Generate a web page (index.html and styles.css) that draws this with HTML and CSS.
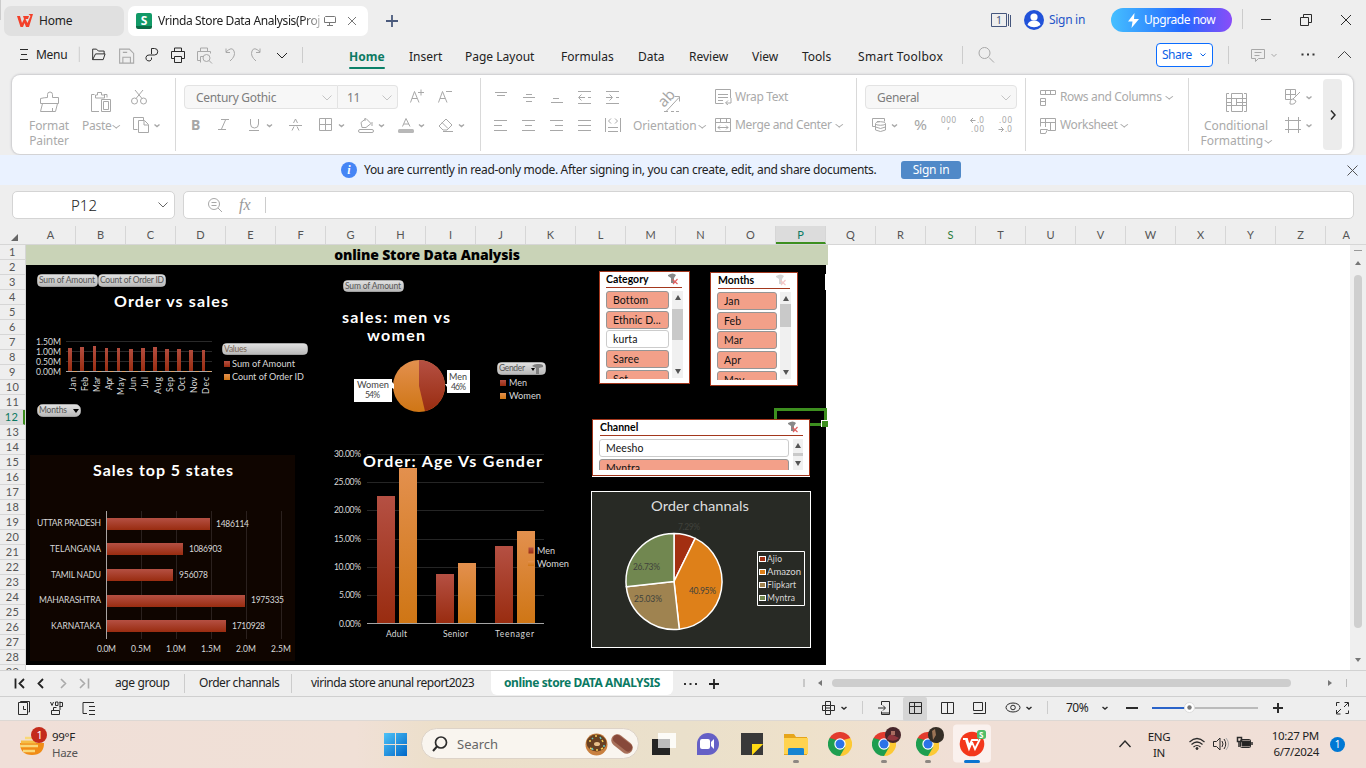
FILE: index.html
```html
<!DOCTYPE html>
<html lang="en">
<head>
<meta charset="utf-8">
<title>Vrinda Store Data Analysis</title>
<link rel="stylesheet" href="styles.css">
</head>
<body>
<svg class="defs" width="0" height="0">
  <defs>
    <linearGradient id="red" x1="0" y1="0" x2="0" y2="1"><stop offset="0" stop-color="#b55043"/><stop offset="1" stop-color="#992c10"/></linearGradient>
    <linearGradient id="orange" x1="0" y1="0" x2="0" y2="1"><stop offset="0" stop-color="#e3904e"/><stop offset="1" stop-color="#cf7615"/></linearGradient>
    <linearGradient id="pill" x1="0" y1="0" x2="0" y2="1"><stop offset="0" stop-color="#e2e2e2"/><stop offset="1" stop-color="#b8b8b8"/></linearGradient>
    <linearGradient id="win" x1="0" y1="0" x2="1" y2="1"><stop offset="0" stop-color="#4fc3f7"/><stop offset="1" stop-color="#0067c8"/></linearGradient>
    <symbol id="chrome" viewBox="-12 -12 24 24">
      <path d="M0 0L-10.4-6A12 12 0 0 1 10.4-6z" fill="#e33b2e"/>
      <path d="M0 0L10.4-6A12 12 0 0 1 0 12z" fill="#fcc934"/>
      <path d="M0 0L0 12A12 12 0 0 1-10.4-6z" fill="#1e9e50"/>
      <path d="M0-6H10.4L5 3z" fill="#fcc934"/><path d="M5.2 3L0 12L-4 4z" fill="#1e9e50"/><path d="M-5.2 3L-10.4-6L0-6z" fill="#1e9e50"/><path d="M-10.4-6H10.4L0-3z" fill="#e33b2e"/>
      <circle r="5.7" fill="#fff"/><circle r="4.5" fill="#2b73e8"/>
    </symbol>
    <symbol id="funnel" viewBox="0 0 12 12"><path d="M1 2Q6-1 9 2L7 5V10H4V5L1 3z" fill="currentColor"/><path d="M5.500 6.500l5 4.500M10.500 6l-4.500 5" stroke="#e06060" stroke-width="1.200"/></symbol>
  </defs>
</svg>

<header class="titlebar">
  <div class="tab home-tab">
    <svg width="17" height="14" viewBox="0 0 17 14"><path d="M0 2h3l2 7 2-4-1-3h6l-1 3H8.500l2 4 3-7-2-2H16L12 13H9L7.500 9 6 13H3.500z" fill="#f3402a"/></svg>
    <span>Home</span>
  </div>
  <div class="tab doc-tab">
    <span class="s-logo">S</span>
    <span class="doc-name">Vrinda Store Data Analysis(Proj</span>
    <svg width="12" height="12" viewBox="0 0 12 12" class="ln mid"><path d="M1.500 1.500h9a1 1 0 0 1 1 1v5h-11v-5zM5.500 8v3M3 10.500h6"/></svg>
    <svg width="10" height="10" viewBox="0 0 10 10" class="ln mid"><path d="M1 1l8 8M9 1L1 9"/></svg>
  </div>
  <svg viewBox="368 0 615 41" class="ln"><path d="M386 21h12M392 15v12" stroke="#4a5a7c" stroke-width="1.800"/></svg>
  <svg viewBox="983 0 41 41" class="ln"><path d="M991.500 13.500h15v13h-15zM1008.500 14v12M1010.500 15v12" stroke="#45567c"/><text x="996" y="24" font-size="10.500" class="tx" fill="#45567c">1</text></svg>
  <svg viewBox="1024 0 25 41"><circle cx="1034" cy="20" r="10" fill="#2152d9"/><circle cx="1034" cy="17" r="3.600" fill="#fff"/><path d="M1027.500 25q1-4.500 6.500-4.500t6.500 4.500q-6.500 4.500-13 0z" fill="#fff"/></svg>
  <span class="signin">Sign in</span>
  <div class="upgrade"><svg width="11" height="15" viewBox="0 0 11 15"><path d="M6.500 0L0 8.500h4.500L3.500 15 11 6H6z" fill="#fff"/></svg><span>Upgrade now</span></div>
  <svg viewBox="1232 0 134 41" class="ln dark"><path d="M1242.500 9v20" stroke="#ccc"/><path d="M1261 19.500h10M1300.500 17.500h8v8h-8zM1303.500 17v-2.500h8v8h-2.500M1341 15l10 10M1351 15l-10 10"/></svg>
</header>

<nav class="menubar">
  <svg viewBox="0 41 36 34" class="ln dark"><path d="M20 49.500h8M21 54.500h6M20 59.500h8"/></svg>
  <span class="menu-word">Menu</span>
  <svg viewBox="75 41 45 34" class="ln dark"><path d="M79.500 47v16" stroke="#ccc"/><path d="M93.500 60.500v-11h4l2 2h6v3M93.500 60.500l3-6h10l-2 6z"/></svg>
  <svg viewBox="118 41 25 34" class="ln dis"><path d="M119.500 48.500h9l4 4v9h-13zM122.500 61v-5h7v5M122.500 51.500h4"/></svg>
  <svg viewBox="145 41 23 34" class="ln dark"><path d="M151.500 54v-5.500h3a3 3 0 0 1 0 6.500h-5.500a3 3 0 1 0 2.500 4.500v-2"/></svg>
  <svg viewBox="168 41 24 34" class="ln dark"><path d="M174.500 52v-4h7v4M174.500 58.500h-3v-7h13v7h-3M174.500 56.500h7v6h-7z"/></svg>
  <svg viewBox="192 41 27 34" class="ln dis"><path d="M200.500 52v-4h7v4M200.500 60.500h-3v-9h13v2M200.500 62.500v-6h3"/><circle cx="206.500" cy="58" r="3.500"/><path d="M209 60.500l3 3"/></svg>
  <svg viewBox="219 41 26 34" class="ln dis"><path d="M226 48.500v4h4M226 52q6-6 8-1t-4 10"/></svg>
  <svg viewBox="245 41 104 34" class="ln dis"><path d="M260 48.500v4h-4M260 52q-6-6-8-1t4 10"/><path d="M277 53l5 5 5-5" stroke="#222"/><path d="M302.500 47v16" stroke="#ccc"/></svg>
  <span class="on">Home</span><span>Insert</span><span>Page Layout</span><span>Formulas</span><span>Data</span><span>Review</span><span>View</span><span>Tools</span><span class="st">Smart Toolbox</span>
  <svg viewBox="950 41 206 34" class="ln dis"><path d="M962.500 46v18" stroke="#ccc"/><circle cx="984.500" cy="53" r="5.500"/><path d="M989 57.500l5 5"/></svg>
  <div class="share">Share<svg width="6" height="4" viewBox="0 0 6 4" class="ln"><path d="M.5.500L3 3 5.500.500"/></svg></div>
  <svg viewBox="1213 41 153 34" class="ln dis"><path d="M1228.500 46v18" stroke="#ccc"/><path d="M1251.500 49.500h13v9h-6l-3 3v-3h-4zM1254.500 52.500h7M1254.500 55.500h5M1271.500 54l2.500 2.500 2.500-2.500" /><path d="M1301.500 54.500h2M1307 54.500h2M1312.500 54.500h2" stroke="#333" stroke-width="2"/><path d="M1338 58l6.500-6.500 6.500 6.500" stroke="#444"/></svg>
</nav>

<section class="ribbon">
  <div class="group g-clip">
    <div class="big"><svg viewBox="26 75 46 43" class="ln dis"><path d="M40.500 103.500v-5q4-1 7-1v-3a2.500 2.500 0 0 1 5 0v3h6v6zM42.500 103.500l-2 8h15l2-8M52.500 108v3"/></svg><span>Format<br>Painter</span></div>
    <div class="big"><svg viewBox="78 75 46 43" class="ln dis"><path d="M99 111.500h-7.500v-17h3M104 94.500h3v3M95.500 98v-3h2v-2.500h4v2.500h3v3zM101.500 99.500h9v12h-9zM103.500 101.500h5v8h-5z"/></svg><span class="dd">Paste</span></div>
    <div class="col">
      <svg viewBox="121 75 54 36" class="ln dis"><circle cx="134.500" cy="101" r="3"/><circle cx="143.500" cy="101" r="3"/><path d="M136 98.500l7-8.500M142 98.500l-7-8.500"/></svg>
      <svg viewBox="121 111 54 43" class="ln dis"><path d="M137.500 129.500h-4v-12h10v3M138.500 120.500h6l4 4v8h-10zM144 121v4h4"/><path d="M154.500 124.500l2.500 2 2.500-2" stroke-width="1.500"/></svg>
    </div>
  </div>
  <div class="group g-font">
    <div class="row1"><div class="combo font">Century Gothic<svg width="10" height="6" viewBox="0 0 10 6" class="ln"><path d="M.5.500L5 5 9.500.500"/></svg></div><div class="combo size">11<svg width="10" height="6" viewBox="0 0 10 6" class="ln"><path d="M.5.500L5 5 9.500.500"/></svg></div>
      <svg viewBox="398 75 82 36" class="ln dis"><path d="M410.500 102.500l4-11 4.500 11M412 98.500h5M418 92.500h6M421 89.500v6M438.500 102.500l4-11 4.500 11M440 98.500h5M446 91.500h6"/></svg></div>
    <svg viewBox="176 111 304 43" class="ln dis glyphs"><text x="191" y="130" font-size="14" font-weight="700">B</text><path d="M221 119.500h8M218 129.500h8M225.500 120l-4 9M250.500 119v5q0 4 4 4t4-4v-5M249 130.500h10M289 125.500h13M292 130.500l2-4M299 130.500l-2-4M293.500 123l2-4 2 4M319.500 118.500h12v12h-12zM325.500 118v13M319 124.500h13M361 122.500l5-4 5 5-5 4h-4zM365 121v-3M372 122v4M439 126l7-7 6 6-5 5h-4zM442 122.500l6 6M443 131.500h10M402.500 126.500l3.500-8 4 8M404 124h5"/><path d="M267 124.500l2.500 2 2.500-2M339 124.500l2.500 2 2.500-2M379 124.500l2.500 2 2.500-2M419 124.500l2.500 2 2.500-2M459 124.500l2.500 2 2.500-2" stroke-width="1.500"/><rect x="358.500" y="129.500" width="15" height="3" rx="1.500"/><rect x="398" y="129" width="16" height="4" rx="1.500" fill="#b8b8b8" stroke="none"/></svg>
  </div>
  <div class="group g-align">
    <div class="col">
      <svg viewBox="481 75 151 36" class="ln dis"><path d="M495 92.500h12M497 95.500h8M526 94.500h6M523 97.500h12M526 101.500h6M553 98.500h6M551 102.500h12M578 91.500h13M578 103.500h13M579 97.500h6M581.500 94.500l-3 3 3 3M588 97.500h3M606 91.500h13M606 103.500h13M606 97.500h6M609.500 94.500l3 3-3 3M616 97.500h3"/></svg>
      <svg viewBox="481 111 151 43" class="ln dis"><path d="M494 120.500h13M494 125.500h8M494 130.500h13M522 120.500h13M525 125.500h7M522 130.500h13M550 120.500h13M555 125.500h8M550 130.500h13M578 120.500h13M578 125.500h13M578 130.500h13M605.500 118v14M620.500 118v14M608 127.500h10M608 131.500h10M611 118.500l-2.500 2.500 2.500 2.500M615 118.500l2.500 2.500-2.500 2.500"/></svg>
    </div>
    <div class="big"><svg viewBox="646 75 46 43" class="ln dis"><text transform="translate(664 108) rotate(-47)" font-size="15" class="tx" fill="#a6a6a6">ab</text><path d="M666 111.500l13-14M674.500 96.500h5v5M664 111.500h4M671 111.500h3M676 111.500h3"/></svg><span class="dd">Orientation</span></div>
    <div class="col">
      <div class="cmd"><svg width="18" height="16" viewBox="714 89 18 16" class="ln dis"><path d="M730.500 98v-8.500h-15v14h8M718 94.500h10M718 97.500h10M718 100.500h5M731 98v5h-5M728 100.500l-2.500 2.500 2.500 2"/></svg>Wrap Text</div>
      <div class="cmd"><svg width="18" height="16" viewBox="714 117 18 16" class="ln dis"><path d="M715.500 118.500h15v13h-15zM715 122.500h15M720.500 118v4M726.500 118v4M718 127.500h10M720 125.500l-2 2 2 2M726 125.500l2 2-2 2"/></svg><span class="dd">Merge and Center</span></div>
    </div>
  </div>
  <div class="group g-num">
    <div class="row1"><div class="combo gen">General<svg width="10" height="6" viewBox="0 0 10 6" class="ln"><path d="M.5.500L5 5 9.500.500"/></svg></div></div>
    <svg viewBox="857 111 168 43" class="ln dis glyphs"><path d="M875 126.500h-2.500v-8h12v3M877 121.500h3"/><path d="M892 124.500l2.500 2 2.500-2" stroke-width="1.500"/><ellipse cx="880.500" cy="123.500" rx="5" ry="1.800"/><path d="M875.500 124v6q5 3 10 0v-6M875.500 127q5 3 10 0M970.500 120.500h5M973 118l-2.500 2.500 2.500 2.500M998.500 129.500h5M1001 127l2.500 2.500-2.500 2.500"/><text x="914" y="130" font-size="14" textLength="13" lengthAdjust="spacingAndGlyphs">%</text><text x="941" y="123" font-size="8" textLength="15">000</text><text x="947" y="129" font-size="11">,</text><text x="977" y="123" font-size="8">.0</text><text x="971" y="132" font-size="8" textLength="13">.00</text><text x="999" y="123" font-size="8" textLength="13">.00</text><text x="1005" y="132" font-size="8">.0</text></svg>
  </div>
  <div class="group g-rows">
    <div class="cmd"><svg width="18" height="17" viewBox="1039 88 18 17" class="ln dis"><path d="M1040.500 89.500h15v4h-15zM1045.500 89v5M1050.500 89v5M1040.500 97.500h5v7h-5zM1040 100.500h5"/></svg><span class="dd">Rows and Columns</span></div>
    <div class="cmd"><svg width="18" height="17" viewBox="1039 116 18 17" class="ln dis"><path d="M1048 129.500h7.500v-12h-15v8M1040 121.500h15M1045.500 118v8M1050.500 122v8M1040.500 128.500h7l-2 4h-5z"/></svg><span class="dd">Worksheet</span></div>
  </div>
  <div class="group g-cond">
    <div class="big"><svg viewBox="1213 75 46 43" class="ln dis"><path d="M1229 93.500h-2.500v18h2.500M1244 93.500h2.500v18h-2.500M1231.500 93.500h11v5h-11zM1231.500 105.500h11v6h-11zM1227 98.500h4M1242 98.500h5M1227 105.500h20M1231.500 98v8M1242.500 98v8M1236.500 99v6M1227 102.500h4M1237 102.500h10"/></svg><span class="dd">Conditional<br>Formatting</span></div>
    <div class="col">
      <svg viewBox="1275 75 46 36" class="ln dis"><path d="M1292 99.500h-6.500v-10h10v6M1285 94.500h10M1290.500 90v9M1300 92l-7 7M1293 99q-3 0-3 5 5 1 6-3z"/><path d="M1306.500 96.500l2.500 2 2.500-2" stroke-width="1.500"/></svg>
      <svg viewBox="1275 111 46 43" class="ln dis"><path d="M1288.500 117v16M1298.500 117v16M1285 120.500h16M1285 129.500h16"/><path d="M1306.500 124.500l2.500 2 2.500-2" stroke-width="1.500"/></svg>
    </div>
    <div class="more"><svg width="6" height="12" viewBox="0 0 6 12" class="ln dark"><path d="M1 1.500L5 6l-4 4.500" stroke-width="1.500"/></svg></div>
  </div>
</section>

<div class="notice">
  <span class="info">i</span><span class="msg">You are currently in read-only mode. After signing in, you can create, edit, and share documents.</span><span class="nbtn">Sign in</span>
  <svg width="11" height="11" viewBox="0 0 11 11" class="ln"><path d="M.5.500l10 10M10.500.500l-10 10" stroke="#555"/></svg>
</div>

<div class="fbar">
  <div class="namebox"><span>P12</span><svg width="10" height="6" viewBox="0 0 10 6" class="ln"><path d="M.5.500L5 5 9.500.500" stroke="#666"/></svg></div>
  <div class="formula"><svg width="90" height="26" viewBox="184 192 90 26" class="ln dis"><circle cx="214" cy="204" r="5.500"/><path d="M218 208l4 4M211.500 202.500h5M211.500 205.500h5"/><path d="M265.500 197v16" stroke="#ccc"/><text x="239" y="210" class="fx">fx</text></svg></div>
</div>

<div class="colhead">
  <span class="corner"><svg width="7" height="7" viewBox="0 0 7 7"><path d="M7 0v7H0z" fill="#666"/></svg></span>
  <span>A</span><span>B</span><span>C</span><span>D</span><span>E</span><span>F</span><span>G</span><span>H</span><span>I</span><span>J</span><span>K</span><span>L</span><span>M</span><span>N</span><span>O</span><span class="sel">P</span><span>Q</span><span>R</span><span class="grn">S</span><span>T</span><span>U</span><span>V</span><span>W</span><span>X</span><span>Y</span><span>Z</span><span class="cut">A</span>
</div>

<main class="sheet">
  <div class="rowhead">
    <span>1</span><span>2</span><span>3</span><span>4</span><span>5</span><span>6</span><span>7</span><span>8</span><span>9</span><span>10</span><span>11</span><span class="sel">12</span><span>13</span><span>14</span><span>15</span><span>16</span><span>17</span><span>18</span><span>19</span><span>20</span><span>21</span><span>22</span><span>23</span><span>24</span><span>25</span><span>26</span><span>27</span><span>28</span><span>29</span>
  </div>
  <div class="canvas">
    <div class="banner">online Store Data Analysis</div>
    <div class="board"></div>

    <svg class="obj c1" viewBox="26 265 294 160">
      <rect x="37.500" y="274.500" width="60" height="12" rx="4" class="pl"/><rect x="98.500" y="274.500" width="67" height="12" rx="4" class="pl"/>
      <text x="39" y="283" class="pt" textLength="56">Sum of Amount</text><text x="100" y="283" class="pt" textLength="64">Count of Order ID</text>
      <text x="114" y="307" class="ttl" textLength="114">Order vs sales</text>
      <path d="M66 341.500h146M66 351.500h146M66 361.500h146" stroke="#292929"/>
      <g class="lb"><text x="36" y="344.500" textLength="25" lengthAdjust="spacingAndGlyphs">1.50M</text><text x="36" y="354.500" textLength="25" lengthAdjust="spacingAndGlyphs">1.00M</text><text x="36" y="364.500" textLength="25" lengthAdjust="spacingAndGlyphs">0.50M</text><text x="36" y="375" textLength="25" lengthAdjust="spacingAndGlyphs">0.00M</text></g>
      <path fill="url(#red)" d="M68 348h4v23h-4zM80 347h4v24h-4zM93 346h3v25h-3zM105 348h3v23h-3zM117 348h3v23h-3zM129 349h4v22h-4zM141 348h4v23h-4zM153 347h4v24h-4zM165 349h4v22h-4zM177 349h4v22h-4zM189 350h4v21h-4zM202 350h3v21h-3z"/>
      <path d="M66 371.500h146" stroke="#a8a8a8"/><path d="M73 371.500h139" stroke="#e0a468" stroke-dasharray="4 8.200"/>
      <g class="lb" text-anchor="end"><text transform="translate(75.500 377) rotate(-90)" textLength="14">Jan</text><text transform="translate(87.500 377) rotate(-90)" textLength="14">Feb</text><text transform="translate(99.500 377) rotate(-90)" textLength="15">Mar</text><text transform="translate(111.500 377) rotate(-90)" textLength="13">Apr</text><text transform="translate(124 377) rotate(-90)" textLength="18">May</text><text transform="translate(136 377) rotate(-90)" textLength="14">Jun</text><text transform="translate(148 377) rotate(-90)" textLength="11">Jul</text><text transform="translate(160.500 377) rotate(-90)" textLength="17">Aug</text><text transform="translate(172.500 377) rotate(-90)" textLength="15">Sep</text><text transform="translate(184.500 377) rotate(-90)" textLength="14">Oct</text><text transform="translate(196.500 377) rotate(-90)" textLength="16">Nov</text><text transform="translate(208.500 377) rotate(-90)" textLength="17">Dec</text></g>
      <rect x="222.500" y="343.500" width="85" height="11" rx="4" class="pl"/><text x="224" y="352" class="pt o" textLength="23">Values</text>
      <rect x="224" y="361" width="6" height="6" fill="url(#red)"/><rect x="224" y="374" width="6" height="6" fill="url(#orange)"/>
      <g class="lb"><text x="232" y="367" textLength="63" lengthAdjust="spacingAndGlyphs">Sum of Amount</text><text x="232" y="380" textLength="72" lengthAdjust="spacingAndGlyphs">Count of Order ID</text></g>
      <rect x="37.500" y="404.500" width="43" height="12" rx="5" class="pl"/><text x="39" y="413" class="pt" textLength="28">Months</text><path d="M73 409h6l-3 4z"/>
    </svg>

    <svg class="obj c2" viewBox="320 265 250 160">
      <rect x="343.500" y="280.500" width="60" height="11" rx="4" class="pl"/><text x="345" y="289" class="pt" textLength="56">Sum of Amount</text>
      <text x="342" y="323" class="ttl" textLength="108">sales: men vs</text><text x="367" y="341" class="ttl" textLength="58">women</text>
      <circle cx="419" cy="386" r="26" fill="url(#orange)"/><path d="M419 386V360A26 26 0 0 1 425 411.300z" fill="url(#red)"/>
      <path d="M354 379h38v3l2 2v5l-2-1v14h-38zM447 370h23v23h-23v-6l-2-3h2z" fill="#fff"/>
      <g class="lb dk"><text x="357" y="388" textLength="32" lengthAdjust="spacingAndGlyphs">Women</text><text x="365" y="398" textLength="15">54%</text><text x="449" y="380" textLength="18" lengthAdjust="spacingAndGlyphs">Men</text><text x="451" y="390" textLength="15">46%</text></g>
      <rect x="497.500" y="362.500" width="48" height="12" rx="4" class="pl"/><text x="499" y="371" class="pt" textLength="26">Gender</text><path d="M531 368h4l-2 3z"/><path d="M532 366q2-2 5-2h2q5 0 4 3l-4 1v6h-3v-6z" fill="#808080"/>
      <rect x="500" y="380" width="6" height="6" fill="url(#red)"/><rect x="500" y="393" width="6" height="6" fill="url(#orange)"/>
      <g class="lb"><text x="509" y="386" textLength="18" lengthAdjust="spacingAndGlyphs">Men</text><text x="509" y="399" textLength="32" lengthAdjust="spacingAndGlyphs">Women</text></g>
    </svg>

    <svg class="obj c3" viewBox="30 455 265 206">
      <rect x="30" y="455" width="265" height="206" fill="#0f0500"/>
      <text x="93" y="476" class="ttl" textLength="140">Sales top 5 states</text>
      <path d="M141.500 511v128M176.500 511v128M211.500 511v128M246.500 511v128M281.500 511v128" stroke="#2b211e"/>
      <g fill="url(#red)"><path d="M107 518h103v12H107z"/><path d="M107 543h76v12h-76z"/><path d="M107 569h66v12h-66z"/><path d="M107 595h138v12H107z"/><path d="M107 620h119v12H107z"/></g>
      <path d="M106.500 511v128" stroke="#a9a4a2"/>
      <g class="lb"><text x="37" y="526" textLength="64">UTTAR PRADESH</text><text x="50" y="552" textLength="51">TELANGANA</text><text x="51" y="578" textLength="50">TAMIL NADU</text><text x="39" y="603" textLength="62">MAHARASHTRA</text><text x="51" y="629" textLength="50">KARNATAKA</text>
      <text x="216" y="527" textLength="33">1486114</text><text x="189" y="552" textLength="33">1086903</text><text x="179" y="578" textLength="29">956078</text><text x="251" y="603" textLength="33">1975335</text><text x="232" y="629" textLength="33">1710928</text>
      <text x="97" y="652" textLength="19">0.0M</text><text x="131" y="652" textLength="20">0.5M</text><text x="166" y="652" textLength="20">1.0M</text><text x="201" y="652" textLength="20">1.5M</text><text x="236" y="652" textLength="20">2.0M</text><text x="271" y="652" textLength="20">2.5M</text></g>
    </svg>

    <svg class="obj c4" viewBox="325 445 255 210">
      <path d="M367 454.500h177M367 482.500h177M367 510.500h177M367 539.500h177M367 567.500h177M367 595.500h177" stroke="#252525"/>
      <g fill="url(#red)"><path d="M377 496h18v127h-18z"/><path d="M436 574h18v49h-18z"/><path d="M495 546h18v77h-18z"/></g>
      <g fill="url(#orange)"><path d="M399 468h18v155h-18z"/><path d="M458 563h18v60h-18z"/><path d="M517 531h18v92h-18z"/></g>
      <path d="M367 623.500h177" stroke="#a5a5a5"/>
      <text x="363" y="467" class="ttl" textLength="179">Order: Age Vs Gender</text>
      <g class="lb"><text x="334" y="457" textLength="27">30.00%</text><text x="334" y="485" textLength="27">25.00%</text><text x="334" y="513" textLength="27">20.00%</text><text x="334" y="542" textLength="27">15.00%</text><text x="334" y="570" textLength="27">10.00%</text><text x="339" y="598" textLength="22">5.00%</text><text x="339" y="627" textLength="22">0.00%</text>
      <text x="386" y="637" textLength="21">Adult</text><text x="443" y="637" textLength="25">Senior</text><text x="495" y="637" textLength="39">Teenager</text><text x="537" y="554" textLength="18" lengthAdjust="spacingAndGlyphs">Men</text><text x="537" y="567" textLength="32" lengthAdjust="spacingAndGlyphs">Women</text></g>
      <rect x="528.500" y="547.500" width="5" height="6" fill="url(#red)"/><rect x="528" y="561" width="6" height="5" fill="url(#orange)"/>
    </svg>

    <div class="obj slicer s-cat">
      <div class="sh">Category<svg width="12" height="12"><use href="#funnel"/></svg></div>
      <div class="sb"><div class="items"><span>Bottom</span><span>Ethnic D...</span><span class="off">kurta</span><span>Saree</span><span>Set</span></div><div class="bar"><i class="up"></i><b></b><i class="dn"></i></div></div>
    </div>
    <div class="obj slicer s-mon">
      <div class="sh">Months<svg width="12" height="12"><use href="#funnel"/></svg></div>
      <div class="sb"><div class="items"><span>Jan</span><span>Feb</span><span>Mar</span><span>Apr</span><span>May</span></div><div class="bar"><i class="up"></i><b></b><i class="dn"></i></div></div>
    </div>
    <div class="obj cursor"></div>
    <div class="obj slicer s-chan">
      <div class="sh">Channel<svg width="12" height="12"><use href="#funnel"/></svg></div>
      <div class="sb"><div class="items"><span class="off">Meesho</span><span>Myntra</span></div><div class="bar"><i class="up"></i><b></b><i class="dn"></i></div></div>
    </div>
    <div class="obj edge"></div>

    <svg class="obj c5" viewBox="591 491 220 157">
      <rect x="591.500" y="491.500" width="219" height="156" fill="#282a25" stroke="#fff"/>
      <text x="651" y="511" class="ot" textLength="98" lengthAdjust="spacingAndGlyphs">Order channals</text>
      <g stroke="#fff" stroke-width="1.500" stroke-linejoin="round"><path d="M674 581.500V533.500A48 48 0 0 1 695.200 538.400z" fill="#a32f11"/><path d="M674 581.500L695.200 538.400A48 48 0 0 1 679.300 629.200z" fill="#de8019"/><path d="M674 581.500L679.300 629.200A48 48 0 0 1 626.300 586.700z" fill="#9f8350"/><path d="M674 581.500L626.300 586.700A48 48 0 0 1 674 533.500z" fill="#718750"/></g>
      <g class="lb pc"><text x="678" y="530" textLength="22">7.29%</text><text x="633" y="570" textLength="27">26.73%</text><text x="689" y="594" textLength="27">40.95%</text><text x="634" y="602" textLength="28">25.03%</text></g>
      <path d="M757.500 551.500h47v54h-47z" fill="none" stroke="#fff"/>
      <g stroke="#fff"><rect x="759.500" y="556.500" width="6" height="5" fill="#a32f11"/><rect x="759.500" y="569.500" width="6" height="5" fill="#de8019"/><rect x="759.500" y="582.500" width="6" height="5" fill="#9f8350"/><rect x="759.500" y="595.500" width="6" height="5" fill="#718750"/></g>
      <g class="lb"><text x="767" y="562" textLength="15">Ajio</text><text x="767" y="575" textLength="34" lengthAdjust="spacingAndGlyphs">Amazon</text><text x="767" y="588" textLength="29">Flipkart</text><text x="767" y="601" textLength="28">Myntra</text></g>
    </svg>
  </div>
  <div class="vscroll"><svg width="16" height="425" viewBox="1350 245 16 425"><path d="M1354 250.500h8" stroke="#999" stroke-width="1"/><path d="M1355 265h6l-3-4zM1355 658h6l-3 4z" fill="#777"/><rect x="1354" y="275" width="8" height="353" rx="4" fill="#cfcfcf"/></svg></div>
</main>

<div class="tabs">
  <svg viewBox="0 670 108 26" class="ln"><path d="M15.500 678.500v10M24 679l-4.500 4.500 4.500 4.500M43 679l-4.500 4.500 4.500 4.500" stroke="#222" stroke-width="1.800"/><path d="M61 679l4.500 4.500-4.500 4.500M80 679l4.500 4.500-4.500 4.500M88.500 678.500v10" stroke="#aaa" stroke-width="1.600"/></svg>
  <span class="t1">age group</span><span class="t2">Order channals</span><span class="t3">virinda store anunal report2023</span><span class="t4">online store DATA ANALYSIS</span>
  <svg viewBox="673 670 159 26" class="ln"><path d="M684 684h2M689.500 684h2M695 684h2" stroke="#333" stroke-width="2"/><path d="M709 684h10M714 679v10" stroke="#222" stroke-width="1.800"/><path d="M804 679v8" stroke="#bbb" stroke-width="1.500"/><path d="M822 680v6l-4-3z" fill="#777" stroke="none"/></svg>
  <span class="hthumb"></span>
  <svg viewBox="1291 670 75 26" class="ln"><path d="M1328 680v6l4-3z" fill="#777" stroke="none"/><path d="M1346.500 679v8" stroke="#bbb"/></svg>
</div>

<div class="status">
  <svg viewBox="0 697 815 24" class="ln dark"><path d="M18.500 702.500h9v12h-9zM20.500 702v-.5h9v10.500h-1M23.500 706v3.500h2.500M50.500 702l1.500 3.500 1.500-3.500M55.500 702v3.500h2.500v-3.500h-2.500M60 701.500v8.500M59.500 702.500h3v4h-3M51.500 714.500v-4h8v4zM53.500 710v-2.500h3M94 702.500h-11v11h4M89 706.500h6M89 710.500h6M89 714.500h6"/></svg>
  <svg viewBox="815 697 55 24" class="ln dark"><path d="M825.500 701.500h5v4h-5zM825.500 710.500h5v4h-5zM825.500 705.500v5M830.500 705.500v5M825.500 705.500h-3v5h3M830.500 705.500h4v5h-4M826 708h4"/><path d="M841.500 707l2.500 2 2.500-2" stroke-width="1.500"/><path d="M862.500 701v13" stroke="#ccc"/></svg>
  <svg viewBox="870 697 33 24" class="ln dark"><path d="M881.500 705v-3.500h8v13h-8v-3M881 713h8M878 708h7M883 705.500l2.500 2.500-2.500 2.500"/></svg>
  <svg viewBox="903 697 24 24" class="ln dark pick"><path d="M909.500 702.500h12v11h-12zM909 706.500h12M914.500 703v10"/></svg>
  <svg viewBox="927 697 128 24" class="ln dark"><path d="M941.500 702.500h12v11h-12zM947.500 703v10M973.500 702.500h9v8h-9zM985.500 702v11.500h-12"/><ellipse cx="1013" cy="707.500" rx="7" ry="4.500"/><circle cx="1013" cy="707.500" r="2.300"/><path d="M1026.500 707l2.500 2 2.500-2" stroke-width="1.500"/><path d="M1047.500 701v13" stroke="#ccc"/></svg>
  <span class="zoomtxt">70%</span>
  <svg viewBox="1095 697 271 24" class="ln dark"><path d="M1102.500 707l2.500 2 2.500-2" stroke-width="1.500"/><path d="M1126 708h12M1273 708h10M1278 703v10" stroke-width="2"/><path d="M1152 708h37" stroke="#2a63c9" stroke-width="2"/><path d="M1189 708h69" stroke="#bbb" stroke-width="2"/><circle cx="1189.500" cy="707.500" r="5" fill="#fff" stroke="#ddd"/><circle cx="1189.500" cy="707.500" r="2.200" fill="#777" stroke="none"/><path d="M1344.500 702.500h4v4M1348 703l-4 4M1336.500 706v-3.500h3M1336.500 710v4h4M1337 713l4-4M1348.500 710.500v3h-3"/></svg>
</div>

<footer class="taskbar">
  <svg viewBox="0 721 50 47"><path d="M20 743h24q0 12-12 12t-12-12z" fill="#f08c16"/><path d="M25 738h8M20 746h18M23 751h12" stroke="#f9d879" stroke-width="2.500"/><path d="M21 742h15" stroke="#f6bd45" stroke-width="3"/><circle cx="39" cy="735" r="8" fill="#c42b1c"/><text x="36.500" y="739" font-size="11" fill="#fff" class="tx">1</text></svg>
  <div class="weather"><span>99°F</span><span class="hz">Haze</span></div>
  <svg viewBox="150 721 271 47"><path d="M384 733h11v11h-11zM396 733h11v11h-11zM384 745h11v11h-11zM396 745h11v11h-11z" fill="url(#win)"/></svg>
  <div class="search"><svg width="16" height="16" viewBox="0 0 16 16" class="ln dark"><circle cx="9" cy="6.500" r="5.500" stroke-width="1.700"/><path d="M5 10.500l-4 4.500" stroke-width="2"/></svg><span>Search</span>
    <svg width="50" height="24" viewBox="586 732 50 24"><circle cx="597.500" cy="744.500" r="11" fill="#c9803f"/><ellipse cx="597.500" cy="743" rx="10" ry="8.500" fill="#684021"/><ellipse cx="598" cy="744" rx="3" ry="2" fill="#e8c08a"/><path d="M590 741h2M596 736h2M603 740l1 2M591 748l2 1M602 749l2-1M597 750h2" stroke="#f8cf51" stroke-width="1.500"/><path d="M593 738l1 1M601 737l1 2M605 745v2M594 750l-1-2" stroke="#62c7c2" stroke-width="1.500"/><rect x="611" y="738" width="24" height="12" rx="6" transform="rotate(38 623 744)" fill="#a8705a"/><rect x="612" y="739" width="22" height="8" rx="4" transform="rotate(38 623 744)" fill="#87493a"/></svg></div>
  <svg viewBox="639 721 300 47"><rect x="652" y="739" width="18" height="16" fill="#242424"/><rect x="658" y="733" width="18" height="15" fill="#fff" opacity=".85"/><path d="M658 739h12v9h-12z" fill="#bbb"/>
    <path d="M697 755v-11a11 11 0 1 1 11 11z" fill="#6560c6"/><rect x="700" y="739" width="10" height="10" rx="2" fill="#fff"/><path d="M711 742l3-3v10l-3-3z" fill="#fff"/>
    <path d="M741 733h22v22h-22z" fill="#393939"/><path d="M752 744h11l-8 11h-3z" fill="#ffda13"/><path d="M763 744l-11 11h11z" fill="#393939"/><path d="M752 744h11l-11 11z" fill="#ffda13"/>
    <path d="M784 734h10l2 3h11v18h-23z" fill="#e6a51b"/><path d="M784 738h24v16h-24z" fill="#ffd34f"/><path d="M788 755v-6q0-1 2-1h12q2 0 2 1v6z" fill="#1684d1"/>
    <use href="#chrome" x="828" y="732" width="24" height="24"/><use href="#chrome" x="872" y="732" width="24" height="24"/><use href="#chrome" x="916" y="732" width="24" height="24"/>
    <circle cx="893" cy="735" r="8" fill="#47252a"/><path d="M887 739q2-6 6-4l6 3q-5 5-12 1z" fill="#8e353c"/><path d="M891 731h4v4h-4z" fill="#a86c60"/>
    <circle cx="936" cy="735" r="8" fill="#342d25"/><path d="M932 731l3-2 1 6-3 5z" fill="#9b7456"/>
    <g fill="#8d8782"><rect x="793" y="760" width="6" height="3" rx="1.500"/><rect x="881" y="760" width="6" height="3" rx="1.500"/><rect x="925" y="760" width="6" height="3" rx="1.500"/></g></svg>
  <svg viewBox="939 721 171 47"><path d="M939 727.500q5 2 5 7.500t-5 7.500z" fill="#342d25"/><rect x="953" y="724.500" width="38" height="38" rx="4" fill="#faf1ee"/><circle cx="972" cy="744" r="12.300" fill="#f3371b"/><path d="M963 739h4l2 7 3-6h6M966 740l3 9 3-7 3 7 5-10" stroke="#fff" stroke-width="1.800" fill="none"/><rect x="977" y="730" width="9" height="9" rx="2.500" fill="#4fbd68"/><text x="979" y="738" font-size="8" font-weight="700" fill="#fff" class="tx">S</text><rect x="964" y="760" width="16" height="3" rx="1.500" fill="#0a74d0"/></svg>
  <svg viewBox="1110 721 30 47" class="ln dark"><path d="M1119.500 747l5.500-6 5.500 6" stroke-width="1.400"/></svg>
  <div class="lang"><span>ENG</span><span>IN</span></div>
  <svg viewBox="1178 721 85 47" class="ln dark"><path d="M1189.500 742q7.500-7 15 0M1191.500 744.500q5.500-5 11 0M1193.500 747q3.500-3 7 0" stroke-width="1.200"/><circle cx="1197" cy="748.500" r="1" fill="#222"/><path d="M1213.500 741.500h3l3.500-3.500v12l-3.500-3.500h-3zM1222 741q2 3 0 6M1224 739q3.500 5 0 10"/><path d="M1226 738q5 6 0 12" stroke="#aaa"/><rect x="1240.500" y="739.500" width="10" height="8" rx="1"/><rect x="1242" y="741" width="8" height="5" fill="#222"/><path d="M1252 742v3M1237.500 737.500h4v4h-4zM1239 742v5" stroke-width="1.500"/></svg>
  <div class="clock"><span>10:27 PM</span><span>6/7/2024</span></div>
  <span class="nb">1</span>
</footer>
</body>
</html>
```
FILE: styles.css
```css
*{box-sizing:border-box}
body{margin:0;width:1366px;height:768px;overflow:hidden;background:#eee;font:12px/16px "Noto Sans","Open Sans",sans-serif;color:#222;display:flex;flex-direction:column}
body>*{flex:none}
svg{display:block}
.defs{position:absolute}
.ln{fill:none;stroke:currentColor}
.dark{color:#2b2b2b}.dis{color:#a8a8a8}.mid{color:#777}
.tx,.glyphs text{font-family:"Noto Sans",sans-serif;stroke:none}
.glyphs text{fill:#a6a6a6}

.titlebar{height:41px;display:grid;grid-template-columns:124px 4px 240px 615px 41px 25px 62px 121px 134px;background:linear-gradient(#ccc,#ccc) 0 0/1px 20px no-repeat}
.tab{height:30px;margin-top:6px;border-radius:7px;display:flex;align-items:center}
.home-tab{margin-left:4px;background:#e0e0e0;padding-left:13px;gap:5px;letter-spacing:-.2px}
.doc-tab{grid-column:3;background:#fff;padding-left:8px}
.s-logo{width:16px;height:16px;border-radius:2px;background:linear-gradient(#119a67 13px,#0a6b45 13px);color:#fff;font:700 12px/15px "Noto Sans";text-align:center}
.doc-name{width:163px;margin:0 3px 0 6px;overflow:hidden;white-space:nowrap;letter-spacing:-.38px;-webkit-mask:linear-gradient(90deg,#000 88%,#0004)}
.doc-tab .mid+.mid{margin-left:11px}
.signin{color:#2455c8;padding-top:12px;letter-spacing:-.3px}
.upgrade{height:24px;margin-top:8px;border-radius:12px;background:linear-gradient(90deg,#45bfff,#2468ff 60%,#8a4df8);color:#fff;display:flex;align-items:center;padding-left:17px;gap:5px;white-space:nowrap;letter-spacing:-.45px}

.menubar{height:34px;display:grid;grid-template-columns:36px 39px 43px 27px 23px 24px 27px 26px 104px 60px 56px 96px 77px 51px 63px 50px 56px 92px 206px 57px 153px;white-space:nowrap}
.menubar>span{padding-top:8px}
.menubar>.menu-word{padding-top:6px;letter-spacing:-.3px}
.menubar>.on{font-weight:700;color:#0b7a63;display:flex;flex-direction:column;width:36px}
.menubar>.st{letter-spacing:.3px}
.on::after{content:"";height:2px;background:#0b8068;border-radius:1px;margin-top:2px}
.share{height:24px;margin-top:2px;border:1px solid #0a6cff;border-radius:4px;background:#fff;color:#0a62e8;display:flex;align-items:center;padding-left:5px;gap:8px;letter-spacing:-.5px}

.ribbon{height:79px;width:1341px;margin:0 0 0 12px;background:#fff;border-radius:8px;box-shadow:0 0 2px 1px #c9c9cc;display:flex;padding-left:1px;color:#aaa}
.group{height:79px;border-right:1px solid;border-image:linear-gradient(transparent 4px,#d9d9d9 4px 75px,transparent 75px) 1;display:flex}
.g-clip{width:163px}.g-font{width:305px;flex-direction:column}.g-align{width:376px}.g-num{width:169px;flex-direction:column}.g-rows{width:163px;flex-direction:column}.g-cond{width:164px;border:0}
.big{text-align:center;line-height:15px;white-space:nowrap;display:flex;flex-direction:column;align-items:center;letter-spacing:-.1px}
.big svg{width:46px;height:43px}
.g-clip .big:first-child{width:72px;flex:none;letter-spacing:-.15px}
.g-clip .big+.big{width:32px;flex:none;letter-spacing:-.3px}
.g-clip .col{margin-left:4px;width:54px;flex:none}
.row1{display:flex;height:36px}
.combo{height:24px;margin-top:10px;background:#f7f7f7;border:1px solid #e3e3e3;color:#7d7d7d;display:flex;align-items:center;justify-content:space-between;padding:1px 5px 0 11px;letter-spacing:-.3px}
.combo svg{color:#c4c4c4}
.combo.font{margin-left:8px;width:154px;border-radius:4px 0 0 4px;letter-spacing:-.3px}
.combo.size{width:60px;border-left:0;border-radius:0 4px 4px 0;padding-left:9px}
.combo.gen{margin-left:8px;width:152px;border-radius:4px}
.row1>svg{width:82px;height:36px}
.glyphs{height:43px}
.g-align .col:first-child{width:151px;flex:none}
.g-align .col:first-child svg:first-child{height:36px}
.g-align .big{width:74px;flex:none}
.cmd{display:flex;align-items:center;height:28px;gap:3px;white-space:nowrap;letter-spacing:-.35px}
.g-align .col:last-child{padding:8px 0 0 8px}
.g-rows{padding:8px 0 0 13px}
.dd::after{content:"";display:inline-block;width:3.500px;height:3.500px;border:solid #a9a9a9;border-width:0 1.500px 1.500px 0;transform:rotate(45deg) skew(-8deg,-8deg);margin:0 1px 3px 5px}
.big .dd::after{margin-left:3px}
.g-cond .big{width:94px;flex:none;letter-spacing:-.05px}
.g-cond .col{margin-left:-8px;width:46px;flex:none}
.more{width:19px;height:71px;margin:4px 0 0 2px;background:#ececec;border-radius:4px;display:flex;align-items:center;justify-content:center}

.notice{height:30px;margin-top:1px;background:#eaf2ff;display:flex;align-items:center;padding-left:341px;white-space:nowrap}
.info{width:16px;height:16px;border-radius:8px;background:#4585f5;color:#fff;font:italic 700 12px/16px "Liberation Serif",serif;text-align:center}
.msg{margin-left:7px;width:509px;letter-spacing:-.31px}
.nbtn{width:60px;height:18px;margin-left:28px;background:#5089c8;color:#fff;border-radius:3px;text-align:center;line-height:17px;letter-spacing:-.2px}
.notice svg{margin-left:386px}

.fbar{height:41px;padding:6px 0 0 12px;display:flex;gap:8px}
.namebox,.formula{height:28px;background:#fff;border:1px solid #d4d4d4;border-radius:5px;display:flex;align-items:center}
.namebox{width:163px;justify-content:space-between;padding:0 6px 0 58px;font:300 15px/18px "Noto Sans",sans-serif}
.formula{width:1171px}
.fx{font:italic 16px "Liberation Serif",serif;fill:#999;stroke:none}

.colhead{height:19px;display:flex;overflow:hidden;font:11px/18px Lato,sans-serif;color:#555;border-bottom:1px solid #d6d6d6}
.colhead span{width:50px;flex:none;text-align:center;border-right:1px solid #d6d6d6}
.colhead .corner{width:26px;border:0;padding:8px 0 0 11px}
.colhead .sel{background:#dcdcdc;color:#0b7a63;border-bottom:2px solid #3d8f1f}
.colhead .grn{color:#2a7a3a}
.colhead .cut{width:24px;text-align:right;border:0;overflow:hidden}

.sheet{height:425px;background:#fff;display:flex;overflow:hidden}
.rowhead{width:26px;flex:none;background:#eee;border-right:1px solid #d6d6d6;font:11px/14px Lato,sans-serif;letter-spacing:.4px;color:#555;text-align:center;height:435px}
.rowhead span{display:block;height:15px;border-bottom:1px solid #d6d6d6}
.rowhead .sel{background:#dcdcdc;color:#0b7a63;border-right:2px solid #3d8f1f}
.canvas{position:relative;width:1324px;flex:none}
.banner{width:802px;height:20px;background:#c9d3b7;text-align:center;font:900 14px/19px "Open Sans",Lato,sans-serif;letter-spacing:-.15px;color:#000}
.board{width:800px;height:400px;background:#000}
.obj{position:absolute}
.c1{left:0;top:20px;width:294px;height:160px}
.c2{left:294px;top:20px;width:250px;height:160px}
.c3{left:4px;top:210px;width:265px;height:206px}
.c4{left:299px;top:200px;width:255px;height:210px}
.c5{left:565px;top:246px;width:220px;height:157px}
.pl{fill:url(#pill);stroke:#cfcfcf;stroke-width:.6}
.pt{font:8.500px Lato,sans-serif;fill:#555}.pt.o{fill:#7a6655}
.ttl{font:700 16px Lato,sans-serif;fill:#fff}
.ot{font:14px Lato,sans-serif;fill:#ddd}
.lb{font:8.500px Lato,sans-serif;fill:#d8d8d8}
.dk{fill:#444}.pc{fill:#40423c}

.slicer{background:#fff;border:1px solid #a3371d;font:10.500px/17px Lato,sans-serif;color:#111}
.sh{height:16px;display:flex;justify-content:space-between;font-weight:700;line-height:15px;border-bottom:1px solid #a3371d;margin:0 7px 0 6px;color:#000}
.sh svg{margin:1px 3px 0 0;color:#888}
.sb{display:flex;justify-content:space-between;padding:3px 6px 0;overflow:hidden}
.items{height:88px;overflow:hidden;display:flex;flex-direction:column;gap:1.700px}
.items span{flex:none;height:18px;background:#f3a089;border:1px solid #959595;border-radius:3px;padding-left:6px;letter-spacing:.1px}
.items .off{background:#fff;border-color:#ccc}
.bar{width:11px;height:87px;background:#f0f0f0;display:flex;flex-direction:column;align-items:center}
.bar i{width:0;height:0;border:3px solid transparent}
.bar .up{border-bottom:5px solid #555;border-top:0;margin-top:4px}
.bar .dn{border-top:5px solid #555;border-bottom:0;margin:auto 0 4px}
.bar b{width:11px;background:#c9c9c9}
.s-cat{left:573px;top:26px;width:91px;height:113px}
.s-cat .items{width:63px}.s-cat b{height:31px;margin-top:9px}
.s-mon{left:684px;top:27px;width:88px;height:114px}
.s-mon .items{width:60px}.s-mon b{height:23px;margin-top:3px}
.s-mon .sh svg{opacity:.35}
.s-mon .sh{margin-left:7px}
.s-chan{left:566px;top:174px;width:218px;height:57px;box-shadow:0 1px #fff}
.s-chan .sh{margin:0 6px 0 7px}.s-chan .sh svg{margin-right:4px}
.s-chan .items{width:190px;height:31px}.s-chan .bar{width:10px;height:31px}.s-chan b{width:10px;height:3px;margin-top:5px}
.cursor{left:748px;top:163px;width:53px;height:18px;border:3px solid #3d8f1f}
.cursor::after{content:"";position:absolute;right:-4px;bottom:-4px;width:6px;height:6px;background:#3d8f1f;border:solid #fff;border-width:1px 0 0 1px}
.edge{left:799px;top:29px;width:1px;height:16px;background:#fff}
.vscroll{width:16px;background:#efefef}

.tabs{height:27px;border-top:1px solid #d2d2d2;border-bottom:1px solid #cfcfcf;display:grid;grid-template-columns:108px 77px 107px 199px 182px 159px 459px 75px;white-space:nowrap}
.tabs span{border-right:1px solid #ccc;height:19px;margin-top:3px;line-height:18px}
.tabs svg{margin-top:-1px;height:26px}
.tabs .t1{padding-left:7px;letter-spacing:-.4px}.tabs .t2{padding-left:14px;letter-spacing:-.45px}.tabs .t3{padding-left:19px;border:0;letter-spacing:-.5px}
.tabs .t4{background:#fff;border:0;margin:0;height:24px;border-radius:0 0 6px 6px;color:#0b7a63;font-weight:700;padding-left:13px;line-height:23px;letter-spacing:-.4px}
.tabs .hthumb{height:8px;margin-top:8px;border:0;background:#cdcdcd;border-radius:4px}
.status{height:24px;display:grid;grid-template-columns:815px 55px 33px 24px 128px 40px 271px;border-bottom:1px solid #ddd8d4}
.status svg{height:24px}
.pick{background:#d5d5d5;border-radius:2px}
.zoomtxt{padding:3px 0 0 11px;letter-spacing:-.5px}

.taskbar{height:47px;background:linear-gradient(90deg,#f0dfd8,#f0e0d6 26%,#ecdfca 32%,#eae0cb 50%,#eee1ca 59%,#f0dfd6 70%,#f0dfd7);display:grid;grid-template-columns:50px 100px 271px 218px 300px 171px 30px 38px 85px 56px 47px;font-size:11.500px;white-space:nowrap}
.weather,.lang,.clock{display:flex;flex-direction:column;padding-top:8px;letter-spacing:-.3px}
.weather{padding-left:2px}.hz{color:#555}
.lang{align-items:center}
.clock{align-items:flex-end;padding-top:7px}
.search{height:31px;margin-top:7px;border-radius:16px;background:#f9f5ef;border:1px solid #ddd3c8;display:flex;align-items:center;padding-left:10px;color:#666;font-size:13px}
.search span{margin-left:9px;width:128px}
.nb{width:15px;height:15px;margin:16px 0 0 11px;border-radius:8px;background:#0078d4;color:#fff;text-align:center;font-size:10px;line-height:15px}
```
